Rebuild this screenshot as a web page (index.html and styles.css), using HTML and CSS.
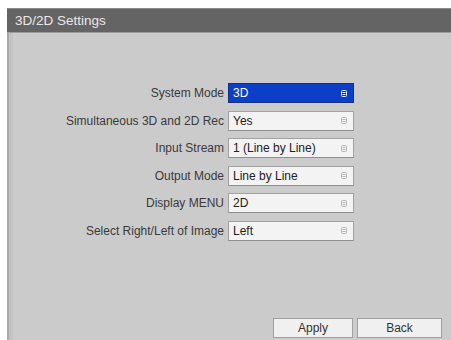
FILE: index.html
```html
<!DOCTYPE html>
<html lang="en">
<head>
    <meta charset="UTF-8">
    <title>3D/2D Settings</title>
    <link rel="stylesheet" href="styles.css">
</head>
<body>
    <div class="window">
        <div class="titlebar">3D/2D Settings</div>

        <div class="form">
            <label class="label">System Mode</label>
            <div class="select selected">
                <span>3D</span>
                <svg class="arrow" width="6" height="7" viewBox="0 0 6 7"><rect x="0.5" y="0.5" width="5" height="6" rx="1" fill="none" stroke="currentColor"/><path d="M1.5 2.5h3M1.5 4.5h3" stroke="currentColor"/></svg>
            </div>

            <label class="label">Simultaneous 3D and 2D Rec</label>
            <div class="select">
                <span>Yes</span>
                <svg class="arrow" width="6" height="7" viewBox="0 0 6 7"><rect x="0.5" y="0.5" width="5" height="6" rx="1" fill="none" stroke="currentColor"/><path d="M1.5 2.5h3M1.5 4.5h3" stroke="currentColor"/></svg>
            </div>

            <label class="label">Input Stream</label>
            <div class="select">
                <span>1 (Line by Line)</span>
                <svg class="arrow" width="6" height="7" viewBox="0 0 6 7"><rect x="0.5" y="0.5" width="5" height="6" rx="1" fill="none" stroke="currentColor"/><path d="M1.5 2.5h3M1.5 4.5h3" stroke="currentColor"/></svg>
            </div>

            <label class="label">Output Mode</label>
            <div class="select">
                <span>Line by Line</span>
                <svg class="arrow" width="6" height="7" viewBox="0 0 6 7"><rect x="0.5" y="0.5" width="5" height="6" rx="1" fill="none" stroke="currentColor"/><path d="M1.5 2.5h3M1.5 4.5h3" stroke="currentColor"/></svg>
            </div>

            <label class="label">Display MENU</label>
            <div class="select">
                <span>2D</span>
                <svg class="arrow" width="6" height="7" viewBox="0 0 6 7"><rect x="0.5" y="0.5" width="5" height="6" rx="1" fill="none" stroke="currentColor"/><path d="M1.5 2.5h3M1.5 4.5h3" stroke="currentColor"/></svg>
            </div>

            <label class="label">Select Right/Left of Image</label>
            <div class="select">
                <span>Left</span>
                <svg class="arrow" width="6" height="7" viewBox="0 0 6 7"><rect x="0.5" y="0.5" width="5" height="6" rx="1" fill="none" stroke="currentColor"/><path d="M1.5 2.5h3M1.5 4.5h3" stroke="currentColor"/></svg>
            </div>
        </div>

        <!-- Bottom buttons -->
        <div class="footer">
            <button class="btn btn-apply">Apply</button>
            <button class="btn btn-back">Back</button>
        </div>
    </div>
</body>
</html>
```

FILE: styles.css
```css
html, body {
    margin: 0;
    padding: 0;
    background-color: #fff;
    overflow: hidden;
}
body {
    font-family: "Liberation Sans", Arial, sans-serif;
    font-size: 12px;
    color: #333;
}
.window {
    margin: 8px 0 0 7px;
    width: 444px;
    height: 332px;
    box-sizing: border-box;
    background-color: #cbcbcb;
    border-left: 2px solid #a9a9a9;
    box-shadow: inset 4px 0 0 #c3c3c3;
    display: flex;
    flex-direction: column;
}
.titlebar {
    height: 25px;
    box-sizing: border-box;
    background-color: #646464;
    border-top: 1px solid #8a8a8a;
    border-bottom: 1px solid #9c9c9c;
    margin-left: -2px;
    padding-left: 8px;
    color: #e8e8e8;
    font-size: 13.5px;
    line-height: 23px;
}
.form {
    display: grid;
    grid-template-columns: 215px 126px;
    column-gap: 4px;
    row-gap: 7.6px;
    padding-top: 50px;
}
.label {
    text-align: right;
    line-height: 20px;
    color: #3a3a3a;
}
.select {
    height: 20px;
    box-sizing: border-box;
    display: flex;
    align-items: center;
    justify-content: space-between;
    padding: 0 6px 0 4px;
    background-color: #f3f3f3;
    border: 1px solid #a2a2a2;
    border-bottom-color: #8e8e8e;
    color: #222;
}
.select .arrow {
    color: #b5b5b5;
}
.select.selected {
    background-color: #0b3fc7;
    border-color: #1a2f80;
    color: #fff;
}
.select.selected .arrow {
    color: #dfe6ff;
}
.footer {
    margin-top: auto;
    display: flex;
    justify-content: flex-end;
    gap: 4px;
    padding: 0 9px 2px 0;
}
.btn {
    height: 20px;
    font-family: inherit;
    font-size: 12px;
    color: #333;
    background-color: #f0f0f0;
    border: 1px solid #a0a0a0;
    border-radius: 0;
    padding: 0;
}
.btn-apply {
    width: 80px;
}
.btn-back {
    width: 85px;
}
```
